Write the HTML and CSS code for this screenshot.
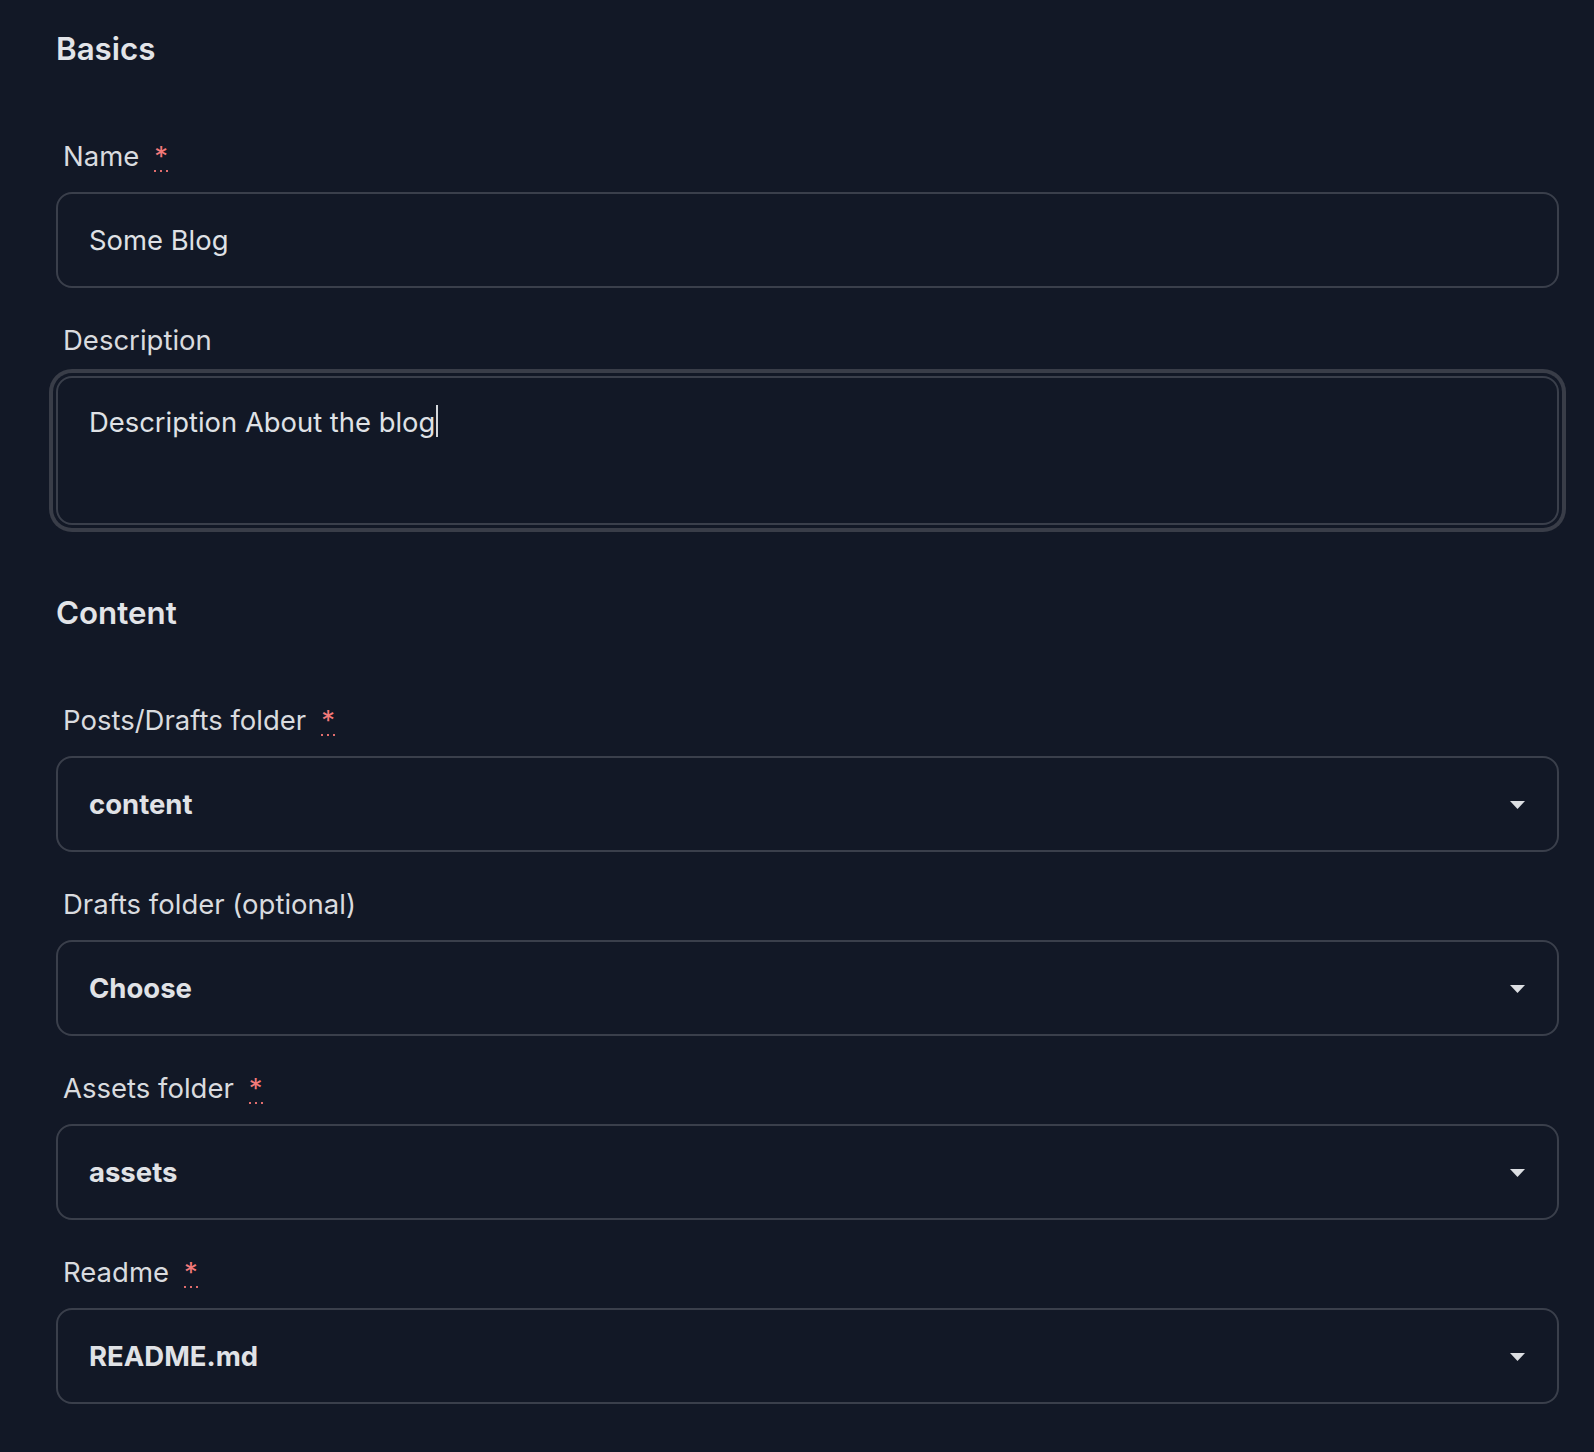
FILE: index.html
```html
<!DOCTYPE html>
<html lang="en">
<head>
<meta charset="utf-8">
<title>Blog settings</title>
<link rel="stylesheet" href="styles.css">
</head>
<body>
<main class="form">
  <section class="section">
    <h2 class="section-title">Basics</h2>
    <div class="fields">
      <div class="field">
        <label class="label" for="name">Name<abbr class="req" title="required">*</abbr></label>
        <input class="control" id="name" type="text" value="Some Blog">
      </div>
      <div class="field">
        <label class="label">Description</label>
        <div class="control textarea focused" role="textbox">Description About the blog<span class="caret"></span></div>
      </div>
    </div>
  </section>

  <section class="section">
    <h2 class="section-title">Content</h2>
    <div class="fields">
      <div class="field">
        <label class="label">Posts/Drafts folder<abbr class="req" title="required">*</abbr></label>
        <div class="control select" role="combobox"><span class="select-value">content</span><svg class="arrow" width="15" height="8" viewBox="0 0 15 8"><path d="M0 0H15L7.5 8Z"/></svg></div>
      </div>
      <div class="field">
        <label class="label">Drafts folder (optional)</label>
        <div class="control select" role="combobox"><span class="select-value">Choose</span><svg class="arrow" width="15" height="8" viewBox="0 0 15 8"><path d="M0 0H15L7.5 8Z"/></svg></div>
      </div>
      <div class="field">
        <label class="label">Assets folder<abbr class="req" title="required">*</abbr></label>
        <div class="control select" role="combobox"><span class="select-value">assets</span><svg class="arrow" width="15" height="8" viewBox="0 0 15 8"><path d="M0 0H15L7.5 8Z"/></svg></div>
      </div>
      <div class="field">
        <label class="label">Readme<abbr class="req" title="required">*</abbr></label>
        <div class="control select" role="combobox"><span class="select-value">README.md</span><svg class="arrow" width="15" height="8" viewBox="0 0 15 8"><path d="M0 0H15L7.5 8Z"/></svg></div>
      </div>
    </div>
  </section>
</main>
</body>
</html>
```

FILE: styles.css
```css
html {
  background: #121826;
}

body {
  margin: 0;
  background: #121826;
  color: #dfe1e5;
  font-family: Inter, "Noto Sans", "Liberation Sans", sans-serif;
}

.form {
  padding: 29px 35px 40px 56px;
  display: flex;
  flex-direction: column;
  gap: 68px;
}

.section-title {
  margin: 0 0 67px 0;
  font-size: 31.3px;
  line-height: 40px;
  font-weight: 600;
  color: #e2e4e8;
}

.fields {
  display: flex;
  flex-direction: column;
  gap: 32px;
}

.field {
  display: flex;
  flex-direction: column;
  gap: 16px;
}

.label {
  padding-left: 7px;
  font-size: 27.5px;
  line-height: 40px;
  font-weight: 400;
  color: #d9dbdf;
}

.req {
  margin-left: 15px;
  color: #f47a7a;
  text-decoration: none;
  padding-bottom: 1px;
  background-image: linear-gradient(to right, #e06d6d 2px, transparent 2px);
  background-size: 6px 2px;
  background-repeat: repeat-x;
  background-position: 0 calc(100% - 2px);
}

.control {
  box-sizing: border-box;
  width: 100%;
  height: 96px;
  margin: 0;
  border: 2px solid #3a3f4b;
  border-radius: 16px;
  background: #121826;
  color: #dfe1e5;
  font-family: inherit;
  font-size: 27.4px;
  padding: 0 32px 0 31px;
  outline: none;
}

.textarea {
  height: 149px;
  padding-top: 24px;
  line-height: 40px;
}

.focused {
  box-shadow: 0 0 0 3px #121826, 0 0 0 7px #393d48;
}

.caret {
  display: inline-block;
  width: 2px;
  height: 32px;
  margin-left: 1px;
  vertical-align: -5px;
  background: #d4d7dc;
}

.select {
  display: flex;
  align-items: center;
  justify-content: space-between;
}

.select-value {
  font-size: 27.5px;
  font-weight: 700;
  color: #e0e2e6;
}

.arrow {
  fill: #dcdee2;
  flex: none;
  margin-top: 2px;
}
```
